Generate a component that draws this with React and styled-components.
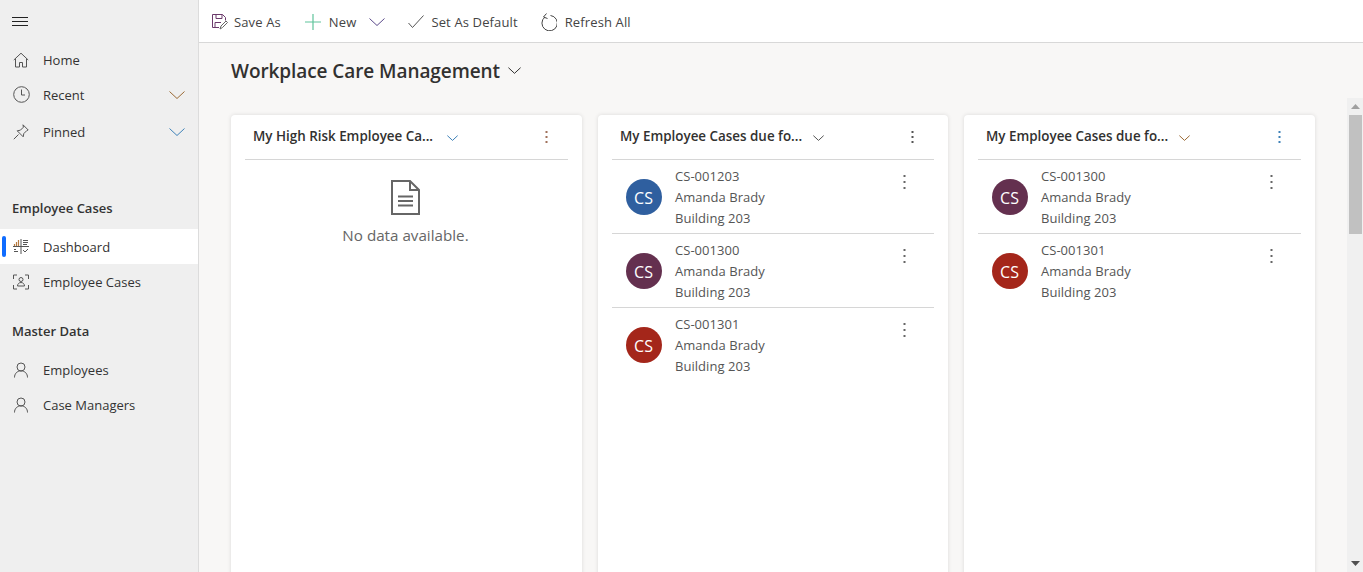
import React from "react";
import styled, { createGlobalStyle } from "styled-components";

const Global = createGlobalStyle`
  html, body { margin: 0; padding: 0; height: 100%; overflow: hidden; }
  body { font-family: "Open Sans", "Noto Sans", "Liberation Sans", sans-serif; color: #323130; }
  #root { height: 100%; }
  * { box-sizing: border-box; }
`;

const Shell = styled.div`display: flex; width: 1363px; height: 572px; overflow: hidden;`;
const Sidebar = styled.nav`
  width: 199px; flex: none; background: #efefef; border-right: 1px solid #dcdcdc;
  display: flex; flex-direction: column; padding-top: 14px;
`;
const Burger = styled.div`height: 14px; padding-left: 12px; margin-bottom: 14px; display: flex; align-items: center;`;
const NavRow = styled.div`
  position: relative; height: ${p => p.$h || 35}px; display: flex; align-items: center;
  padding-left: 12px; font-size: 13px; color: #333;
  margin-top: ${p => p.$top || 0}px;
  background: ${p => (p.$active ? "#fff" : "transparent")};
`;
const NavIcon = styled.span`width: 31px; flex: none; padding-left: 1px; display: flex; align-items: center; color: #555;`;
const NavChevron = styled.span`margin-left: auto; margin-right: 13px; display: flex;`;
const Marker = styled.span`
  position: absolute; left: 2px; top: 7px; bottom: 7px; width: 4px; border-radius: 2px; background: #0f6cff;
`;
const Heading = styled.div`
  height: 34px; display: flex; align-items: center; padding-left: 12px; font-size: 13px;
  font-weight: 600; color: #333; margin-top: ${p => p.$top}px; margin-bottom: ${p => p.$bottom || 0}px;
`;

const Main = styled.div`flex: 1; display: flex; flex-direction: column; min-width: 0; background: #f8f7f6;`;
const Toolbar = styled.div`
  height: 43px; flex: none; background: #fff; border-bottom: 1px solid #d8d8d8;
  display: flex; align-items: center; padding: 1px 0 0 13px; font-size: 13px; letter-spacing: .13px; color: #444;
`;
const ToolButton = styled.div`display: flex; align-items: center; gap: ${p => p.$gap || 6}px; margin-right: ${p => p.$mr || 22}px;`;
const ToolChevron = styled.span`display: flex; margin-left: 5px;`;
const TitleRow = styled.div`
  height: 55px; flex: none; padding-left: 32px; display: flex; align-items: center; gap: 8px;
  font-size: 19px; font-weight: 600; letter-spacing: -.08px; color: #323130;
`;
const Body = styled.div`flex: 1; min-height: 0; display: flex;`;
const Board = styled.div`
  flex: 1; min-width: 0; padding: 17px 32px 0; display: grid; grid-template-columns: 351px 350px 351px; gap: 16px;
`;
const Card = styled.section`
  background: #fff; border-radius: 4px 4px 0 0; box-shadow: 0 0 4px rgba(0,0,0,.12); height: 500px; padding: 0 14px;
`;
const CardHead = styled.header`
  height: 45px; border-bottom: 1px solid #d6d6d6; display: flex; align-items: center; padding: 0 0 2px 8px;
  font-size: 13.4px; font-weight: 600; color: #323130; position: relative;
`;
const CardChevron = styled.span`position: absolute; left: ${p => p.$x}px; top: 20px; display: flex;`;
const CardKebab = styled.span`position: absolute; right: 20px; top: 15px; display: flex;`;
const Empty = styled.div`display: flex; flex-direction: column; align-items: center; padding: 20px 2px 0 0; gap: 10px; font-size: 15.2px; color: #666;`;
const Row = styled.div`
  height: 74px; border-bottom: 1px solid #d6d6d6; display: flex; position: relative; padding: 6px 0 0 14px;
  &:last-child { border-bottom: none; }
`;
const Avatar = styled.div`
  width: 36px; height: 36px; border-radius: 50%; background: ${p => p.$bg}; color: #fff; flex: none; margin-top: 13px;
  display: flex; align-items: center; justify-content: center; font-size: 16px; margin-right: 13px; padding: 1px 1px 0 0;
`;
const Lines = styled.div`font-size: 13px; line-height: 21px; letter-spacing: .04px; color: #555;`;
const RowKebab = styled.span`position: absolute; right: 28px; top: 14px; display: flex;`;

const Scrollbar = styled.div`width: 16px; flex: none; background: #f0f0f0; display: flex; flex-direction: column; align-items: center;`;
const Arrow = styled.span`height: 17px; display: flex; align-items: center; justify-content: center;`;
const Thumb = styled.div`width: 13px; height: 119px; background: #c1c1c1; margin-left: 1px;`;
const Spacer = styled.div`flex: 1;`;

const Chevron = ({ w = 16, h = 8, c = "currentColor" }) => (
  <svg width={w} height={h} viewBox="0 0 16 8" fill="none" stroke={c} strokeWidth={16 / w}><path d="M.5.5 8 7.5 15.5.5" /></svg>
);
const Kebab = ({ c = "#666", step = 5, size = 2 }) => (
  <svg width="3" height={step * 2 + 4} fill={c}>
    {[0, 1, 2].map(i => <rect key={i} x="0.5" y={1 + i * step} width={size} height={size} />)}
  </svg>
);
const Stroke = ({ children, s = 16, vb = "0 0 16 16", c = "#555" }) => (
  <svg width={s} height={s} viewBox={vb} fill="none" stroke={c} strokeWidth="1">{children}</svg>
);
const Person = () => (
  <Stroke s={16}><circle cx="8" cy="5" r="4" /><path d="M1.5 15.5c0-3.8 2.5-6.6 6.5-6.6s6.5 2.8 6.5 6.6" /></Stroke>
);

const items = [
  { id: "CS-001203", bg: "#2f5f9f" },
  { id: "CS-001300", bg: "#64304f" },
  { id: "CS-001301", bg: "#a4261a" },
];

const CaseRow = ({ id, bg }) => (
  <Row>
    <Avatar $bg={bg}>CS</Avatar>
    <Lines>{id}<br />Amanda Brady<br />Building 203</Lines>
    <RowKebab><Kebab c="#666" step={6} /></RowKebab>
  </Row>
);

export default function App() {
  return (
    <Shell>
      <Global />
      <Sidebar>
        <Burger>
          <svg width="16" height="11" viewBox="0 0 16 11" stroke="#222" strokeWidth="1"><path d="M0 1.5h16M0 5.5h16M0 9.5h16" /></svg>
        </Burger>
        <NavRow>
          <NavIcon><Stroke><path d="M.8 8 8 1.2 15.2 8M2.5 6.8V15h4v-4.5h3V15h4V6.8" /></Stroke></NavIcon>
          Home
        </NavRow>
        <NavRow>
          <NavIcon><Stroke s={17} vb="0 0 17 17"><circle cx="8.5" cy="8.5" r="7.8" /><path d="M8.5 3.5v5.5h3.5" /></Stroke></NavIcon>
          Recent
          <NavChevron><Chevron c="#9a6a35" /></NavChevron>
        </NavRow>
        <NavRow $h={39}>
          <NavIcon><Stroke><path d="M10 .8 15.2 6l-1.4.6-3 3-.6 3.2-6-6 3.2-.6 3-3zM5.5 10.5.8 15.2" /></Stroke></NavIcon>
          Pinned
          <NavChevron><Chevron c="#3f82b8" /></NavChevron>
        </NavRow>
        <Heading $top={40} $bottom={4}>Employee Cases</Heading>
        <NavRow $active>
          <Marker />
          <NavIcon>
            <svg width="16" height="16" viewBox="0 0 16 16" fill="none" strokeWidth="1">
              <path d="M1.5 7V5M3.5 7V3M5.5 7V1" stroke="#b5793f" strokeWidth="1.2" />
              <path d="M0 7.5h16M8 0v15M10 1.5h5M10 3.5h5M10 5.5h4M1 10.5h2M1 12.5h4M10 11l2 2 3-3" stroke="#555" />
            </svg>
          </NavIcon>
          Dashboard
        </NavRow>
        <NavRow>
          <NavIcon>
            <Stroke><path d="M4 1H.5v4M12 1h3.5v4M.5 11v4H4M15.5 11v4H12" /><circle cx="8" cy="5.5" r="2" /><path d="M4.5 12c0-2 1.5-3.5 3.5-3.5s3.5 1.5 3.5 3.5z" /></Stroke>
          </NavIcon>
          Employee Cases
        </NavRow>
        <Heading $top={15}>Master Data</Heading>
        <NavRow $top={4}><NavIcon><Person /></NavIcon>Employees</NavRow>
        <NavRow><NavIcon><Person /></NavIcon>Case Managers</NavRow>
      </Sidebar>
      <Main>
        <Toolbar>
          <ToolButton $gap={6} $mr={24}>
            <svg width="16" height="16" viewBox="0 0 16 16" fill="none" stroke="#6b3a6b"><path d="M7 13.5H.5V.5h10l3 3v3" /><path d="M4 .5v4h6v-4M3 13.5V8.5h6" /><path d="M8 15l1-3 5-5 1.5 1.5-5 5z" stroke="#666" /></svg>
            Save As
          </ToolButton>
          <ToolButton $gap={8} $mr={23}>
            <svg width="16" height="16" viewBox="0 0 16 16" stroke="#5fc49b" strokeWidth="1.2"><path d="M8 0v16M0 8h16" /></svg>
            New
            <ToolChevron><Chevron c="#5a4a8a" /></ToolChevron>
          </ToolButton>
          <ToolButton $gap={7} $mr={22}>
            <svg width="16" height="13" viewBox="0 0 16 13" fill="none" stroke="#555"><path d="M.5 8 4.5 12.5 15.5.5" /></svg>
            Set As Default
          </ToolButton>
          <ToolButton $gap={8}>
            <svg width="17" height="18" viewBox="0 0 17 18" fill="none" stroke="#444"><path d="M5 4A7.7 7.7 0 1 0 10.5 2.5M6.5.5 3.5 4l4 1.5" /></svg>
            Refresh All
          </ToolButton>
        </Toolbar>
        <TitleRow>
          Workplace Care Management
          <Chevron w={13} h={7} c="#323130" />
        </TitleRow>
        <Body>
          <Board>
            <Card>
              <CardHead>
                My High Risk Employee Ca...
                <CardChevron $x={202}><Chevron w={11} h={6} c="#3f82b8" /></CardChevron>
                <CardKebab><Kebab c="#a0705a" /></CardKebab>
              </CardHead>
              <Empty>
                <svg width="29" height="35" viewBox="0 0 29 35" fill="none" stroke="#666" strokeWidth="2"><path d="M1 1h18l9 9v24H1zM19 1v9h9" /><path d="M7 16.5h15M7 21h15M7 25.5h15" /></svg>
                No data available.
              </Empty>
            </Card>
            <Card>
              <CardHead>
                My Employee Cases due fo...
                <CardChevron $x={201}><Chevron w={11} h={6} c="#555" /></CardChevron>
                <CardKebab><Kebab c="#555" /></CardKebab>
              </CardHead>
              {items.map(i => <CaseRow key={i.id} {...i} />)}
            </Card>
            <Card>
              <CardHead>
                My Employee Cases due fo...
                <CardChevron $x={201}><Chevron w={11} h={6} c="#9a6a35" /></CardChevron>
                <CardKebab><Kebab c="#3f82b8" /></CardKebab>
              </CardHead>
              {items.slice(1).map(i => <CaseRow key={i.id} {...i} />)}
            </Card>
          </Board>
          <Scrollbar>
            <Arrow><svg width="9" height="5" viewBox="0 0 9 5" fill="#a0a0a0"><path d="M0 5 4.5 0 9 5z" /></svg></Arrow>
            <Thumb />
            <Spacer />
            <Arrow><svg width="9" height="5" viewBox="0 0 9 5" fill="#505050"><path d="M0 0 4.5 5 9 0z" /></svg></Arrow>
          </Scrollbar>
        </Body>
      </Main>
    </Shell>
  );
}
